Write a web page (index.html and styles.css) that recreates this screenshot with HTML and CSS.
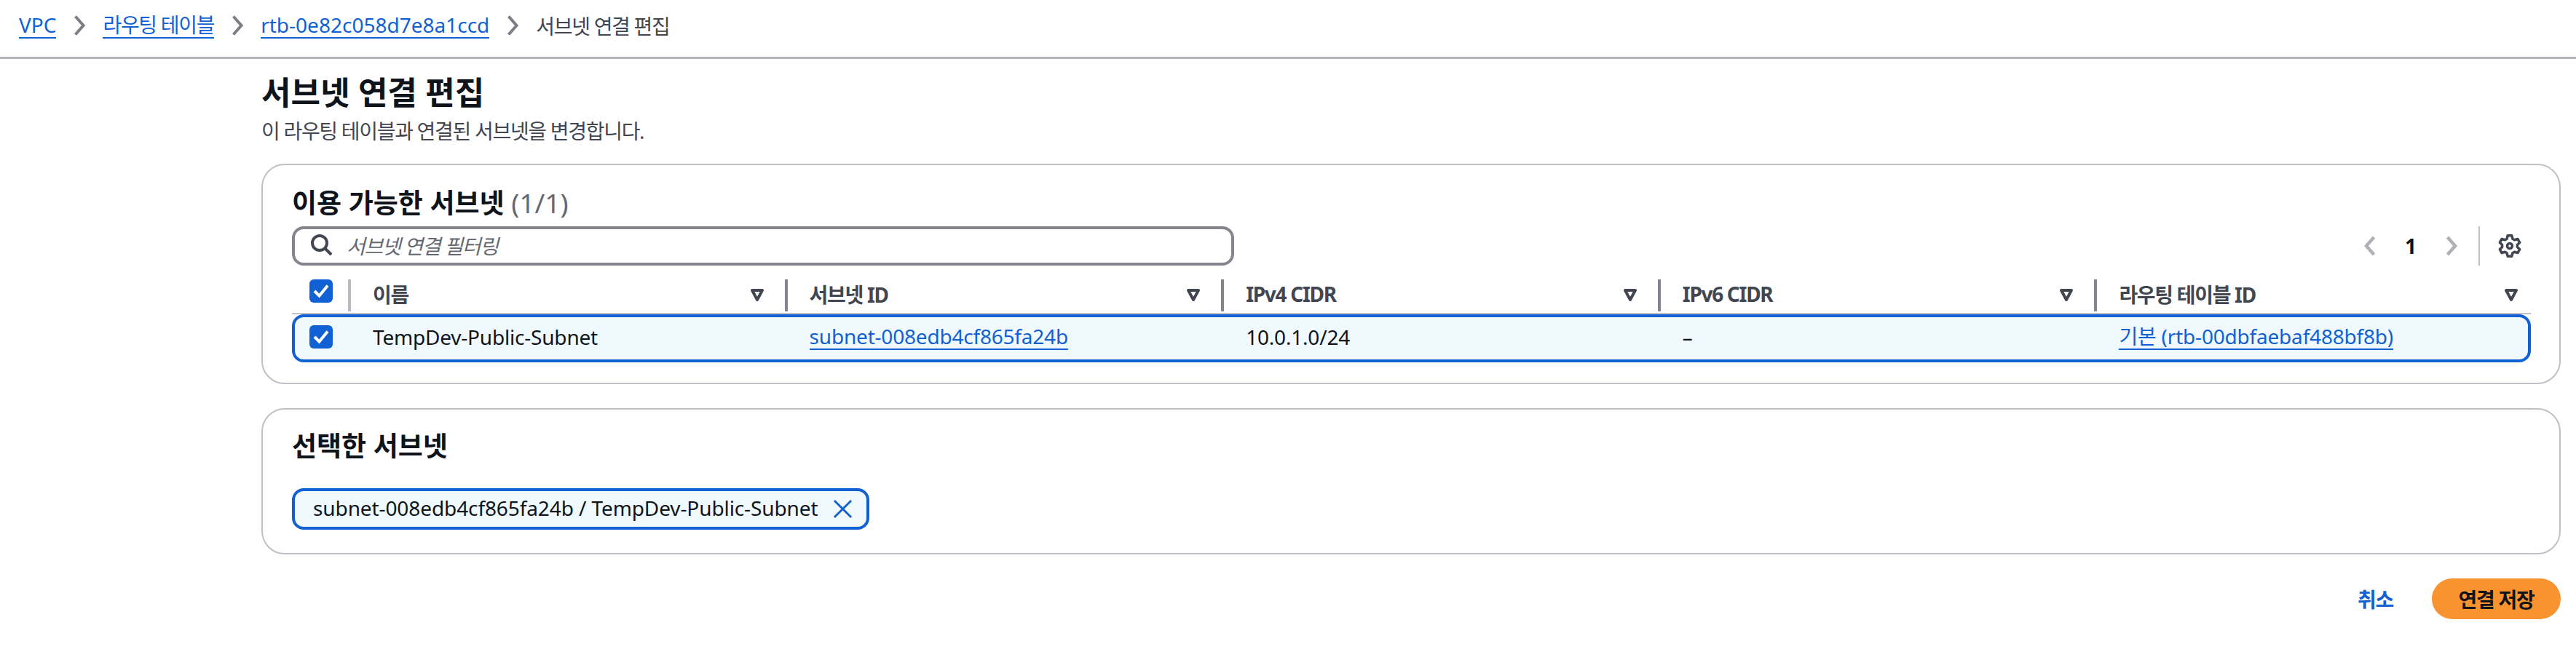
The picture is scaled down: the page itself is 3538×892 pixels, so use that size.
FILE: index.html
```html
<!DOCTYPE html>
<html lang="ko">
<head>
    <meta charset="UTF-8">
    <meta name="viewport" content="width=device-width, initial-scale=1.0">
    <title>서브넷 연결 편집</title>
    <link rel="stylesheet" href="styles.css">
</head>
<body>

    <nav class="breadcrumbs">
        <a href="#">VPC</a>
        <svg class="crumb-arrow" viewBox="0 0 16 32"><path d="M2.5 3.5L13.5 16 2.5 28.5"/></svg>
        <a class="ko" href="#">라우팅 테이블</a>
        <svg class="crumb-arrow" viewBox="0 0 16 32"><path d="M2.5 3.5L13.5 16 2.5 28.5"/></svg>
        <a href="#">rtb-0e82c058d7e8a1ccd</a>
        <svg class="crumb-arrow" viewBox="0 0 16 32"><path d="M2.5 3.5L13.5 16 2.5 28.5"/></svg>
        <span class="crumb-current ko">서브넷 연결 편집</span>
    </nav>

    <main class="content">
        <h1>서브넷 연결 편집</h1>
        <p class="subtitle ko">이 라우팅 테이블과 연결된 서브넷을 변경합니다.</p>

        <section class="card card-subnets">
            <h2>이용 가능한 서브넷 <span class="count">(1/1)</span></h2>

            <div class="toolbar">
                <div class="filter">
                    <svg class="search-icon" viewBox="0 0 32 32"><circle cx="13" cy="13" r="10"/><path d="M20.5 20.5L29 29"/></svg>
                    <span class="placeholder ko">서브넷 연결 필터링</span>
                </div>
                <div class="pagination">
                    <svg class="page-arrow" viewBox="0 0 16 32"><path d="M13.5 4L3 16l10.5 12"/></svg>
                    <span class="page-num">1</span>
                    <svg class="page-arrow" viewBox="0 0 16 32"><path d="M2.5 4L13 16 2.5 28"/></svg>
                </div>
                <div class="settings">
                    <svg class="gear" viewBox="0 0 32 32"><path d="M12.07 6.27L13.23 1.77H18.77L19.93 6.27 22.47 7.73 26.94 6.49 29.71 11.28 26.4 14.54V17.46L29.71 20.72 26.94 25.51 22.47 24.27 19.93 25.73 18.77 30.23H13.23L12.07 25.73 9.53 24.27 5.06 25.51 2.29 20.72 5.6 17.46V14.54L2.29 11.28 5.06 6.49 9.53 7.73z"/><circle cx="16" cy="16" r="3.5"/></svg>
                </div>
            </div>

            <div class="table-row table-head">
                <div class="cell cell-check"><span class="checkbox"><svg viewBox="0 0 32 32"><path d="M7 16l6.5 6.5L25 8.5"/></svg></span></div>
                <div class="cell head-cell">이름<svg class="sort" viewBox="0 0 24 20"><path d="M5 4h14l-7 13z"/></svg></div>
                <div class="cell head-cell">서브넷 ID<svg class="sort" viewBox="0 0 24 20"><path d="M5 4h14l-7 13z"/></svg></div>
                <div class="cell head-cell">IPv4 CIDR<svg class="sort" viewBox="0 0 24 20"><path d="M5 4h14l-7 13z"/></svg></div>
                <div class="cell head-cell">IPv6 CIDR<svg class="sort" viewBox="0 0 24 20"><path d="M5 4h14l-7 13z"/></svg></div>
                <div class="cell head-cell head-last">라우팅 테이블 ID<svg class="sort" viewBox="0 0 24 20"><path d="M5 4h14l-7 13z"/></svg></div>
            </div>

            <div class="table-row table-selected">
                <div class="cell cell-check"><span class="checkbox"><svg viewBox="0 0 32 32"><path d="M7 16l6.5 6.5L25 8.5"/></svg></span></div>
                <div class="cell body-cell">TempDev-Public-Subnet</div>
                <div class="cell body-cell"><a href="#">subnet-008edb4cf865fa24b</a></div>
                <div class="cell body-cell">10.0.1.0/24</div>
                <div class="cell body-cell">–</div>
                <div class="cell body-cell"><a href="#">기본 (rtb-00dbfaebaf488bf8b)</a></div>
            </div>
        </section>

        <section class="card card-selected">
            <h2>선택한 서브넷</h2>
            <div class="token">
                <span class="token-label">subnet-008edb4cf865fa24b / TempDev-Public-Subnet</span>
                <svg class="token-close" viewBox="0 0 28 28"><path d="M2 2l24 24M26 2L2 26"/></svg>
            </div>
        </section>

        <div class="actions">
            <a class="cancel ko" href="#">취소</a>
            <button type="button" class="save ko">연결 저장</button>
        </div>
    </main>

</body>
</html>
```

FILE: styles.css
```css
* {
    box-sizing: border-box;
}
body {
    margin: 0;
    font-family: "Noto Sans", "Noto Sans CJK KR", sans-serif;
    font-size: 28px;
    color: #0f141a;
    background: #fff;
}
a {
    color: #1261d4;
    text-decoration: none;
}
svg {
    display: block;
    flex: none;
    fill: none;
}
/* hangul runs a little tighter in the original */
.ko {
    letter-spacing: -1.3px;
}

.breadcrumbs {
    display: flex;
    align-items: center;
    height: 81px;
    padding: 0 0 8px 26px;
    border-bottom: 3px solid #b4b4bb;
}
.breadcrumbs a {
    border-bottom: 2px solid #1261d4;
    line-height: 34px;
}
.crumb-arrow {
    width: 16px;
    height: 32px;
    margin: 0 24px;
    stroke: #7d7d85;
    stroke-width: 4;
}
.crumb-current {
    color: #424650;
}

.content {
    padding: 0 21px 0 359px;
}
h1 {
    margin: 18px 0 0;
    font-size: 44px;
    line-height: 56px;
    font-weight: 700;
}
.subtitle {
    margin: 7px 0 1px;
    line-height: 36px;
    color: #424650;
}

.card {
    border: 2px solid #c0c0c7;
    border-radius: 32px;
    padding: 0 40px;
}
.card-subnets {
    height: 303px;
    margin-top: 27px;
    padding-top: 28px;
}
.card-selected {
    height: 201px;
    margin-top: 33px;
    padding-top: 26px;
}
h2 {
    margin: 0;
    font-size: 37px;
    line-height: 48px;
    font-weight: 700;
}
.count {
    font-weight: 400;
    color: #656871;
}

.toolbar {
    display: flex;
    align-items: center;
    height: 54px;
    margin-top: 8px;
}
.filter {
    display: flex;
    align-items: center;
    width: 1294px;
    height: 54px;
    padding: 0 0 2px 21px;
    border: 4px solid #85858d;
    border-radius: 16px;
}
.search-icon {
    width: 32px;
    height: 32px;
    stroke: #424650;
    stroke-width: 4;
}
.placeholder {
    margin-left: 18px;
    font-style: italic;
    color: #656871;
}
.pagination {
    display: flex;
    align-items: center;
    gap: 40px;
    margin-left: auto;
    margin-right: 29px;
}
.page-arrow {
    width: 16px;
    height: 32px;
    stroke: #b0b0b7;
    stroke-width: 4.5;
}
.page-num {
    font-weight: 700;
}
.settings {
    height: 54px;
    width: 71px;
    border-left: 2px solid #c0c0c7;
    display: flex;
    align-items: center;
    justify-content: flex-end;
    padding-right: 12px;
}
.gear {
    width: 32px;
    height: 32px;
    stroke: #424650;
    stroke-width: 3.5;
    stroke-linejoin: round;
}

.table-row {
    display: grid;
    grid-template-columns: 77px repeat(5, 1fr);
    width: 3075px;
}
.table-head {
    height: 48px;
    margin-top: 19px;
    padding-bottom: 10px;
    border-bottom: 2px solid #c0c0c7;
}
.table-selected {
    height: 66px;
    padding-bottom: 4px;
    border-radius: 16px;
    background: #f0fafe;
    box-shadow: inset 0 0 0 4px #1261d4;
}
.cell {
    display: flex;
    align-items: center;
}
.cell-check {
    padding-left: 24px;
}
.table-head .cell-check {
    align-items: flex-start;
}
.checkbox {
    display: block;
    width: 32px;
    height: 32px;
    border-radius: 6px;
    background: #1261d4;
}
.checkbox svg {
    width: 32px;
    height: 32px;
    stroke: #fff;
    stroke-width: 4;
}
.head-cell {
    justify-content: space-between;
    padding: 0 26px 4px 30px;
    border-left: 4px solid #85858d;
    font-weight: 700;
    letter-spacing: -1.3px;
    color: #424650;
}
.table-head .cell-check + .head-cell {
    border-left-color: #b8b8c0;
}
.head-last {
    padding-right: 15px;
}
.sort {
    width: 24px;
    height: 20px;
    margin-top: 2px;
    stroke: #424650;
    stroke-width: 4;
    stroke-linejoin: round;
}
.body-cell {
    padding-left: 34px;
    letter-spacing: -.2px;
}
.body-cell a {
    border-bottom: 2px solid #1261d4;
    line-height: 34px;
}

.token {
    display: inline-flex;
    align-items: center;
    gap: 20px;
    height: 57px;
    margin-top: 34px;
    padding: 0 19px 0 25px;
    border: 4px solid #1261d4;
    border-radius: 16px;
    background: #f0fafe;
    letter-spacing: -.1px;
}
.token-label {
    margin-bottom: 4px;
}
.token-close {
    width: 27px;
    height: 27px;
    stroke: #1261d4;
    stroke-width: 3;
}

.actions {
    display: flex;
    align-items: center;
    justify-content: flex-end;
    gap: 53px;
    margin-top: 33px;
}
.cancel {
    font-weight: 700;
}
.save {
    width: 177px;
    height: 56px;
    padding: 0;
    border: 0;
    border-radius: 28px;
    background: #f89330;
    font-family: inherit;
    font-size: 28px;
    font-weight: 700;
    color: #0f141a;
}
```
